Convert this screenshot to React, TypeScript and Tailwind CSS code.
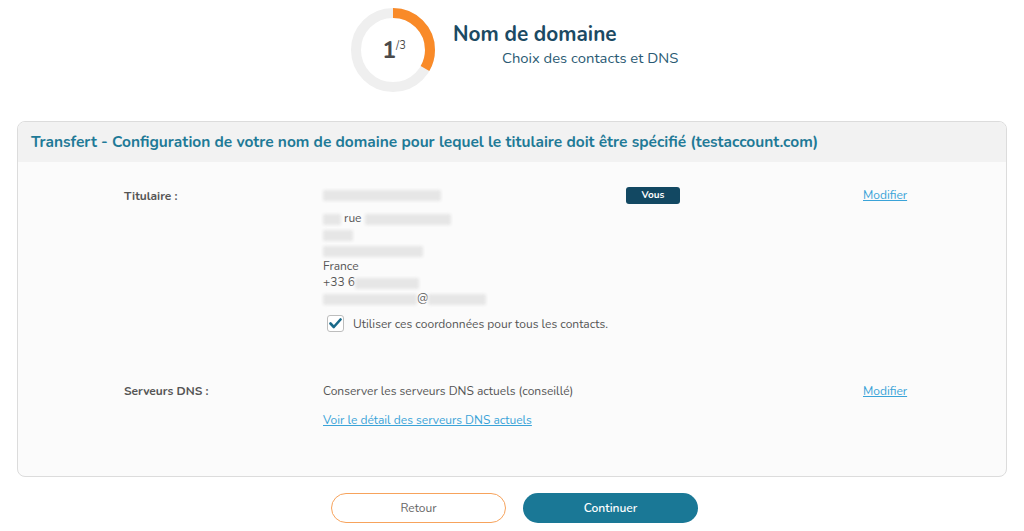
import React from "react";

const font = { fontFamily: "Nunito, Lato, 'Noto Sans', sans-serif" };

function Blur({ w, className = "" }: { w: number; className?: string }) {
	return (
		<span
			className={`inline-block h-[11px] rounded-[2px] bg-[#e6e6e6] blur-[1.5px] align-middle ${className}`}
			style={{ width: w }}
		/>
	);
}

function StepRing() {
	const r = 37;
	const c = 2 * Math.PI * r;
	return (
		<div className="relative h-[84px] w-[84px]">
			<svg width="84" height="84" viewBox="0 0 84 84">
				<circle cx="42" cy="42" r={r} fill="none" stroke="#efefef" strokeWidth="10" />
				<circle
					cx="42"
					cy="42"
					r={r}
					fill="none"
					stroke="#f98a28"
					strokeWidth="10"
					strokeDasharray={`${c / 3} ${c}`}
					transform="rotate(-90 42 42)"
				/>
			</svg>
			<div className="absolute inset-0 flex items-center justify-center pl-[2px]">
				<span className="text-[23px] font-bold leading-none text-[#4a4a4a]">1</span>
				<span className="-mt-[8px] text-[11px] text-[#4a4a4a]">/3</span>
			</div>
		</div>
	);
}

export default function App() {
	return (
		<div className="min-h-[531px] w-full bg-white text-[12px] text-[#555]" style={font}>
			<div className="flex pl-[351px] pt-[8px]">
				<div className="flex items-start gap-[18px]">
					<StepRing />
					<div className="pt-[13px]">
						<div className="text-[20.8px] font-bold leading-[26px] text-[#1b4a63]">Nom de domaine</div>
						<div className="pl-[49px] pt-[1px] text-[14.8px] leading-[20px] text-[#2a5a73]">
							Choix des contacts et DNS
						</div>
					</div>
				</div>
			</div>

			<div className="mx-[17px] mt-[29px] overflow-hidden rounded-[8px] border border-[#dcdcdc] bg-[#fbfbfb]">
				<div className="flex h-[40px] items-center bg-[#f2f2f2] px-[13px] text-[15.5px] font-bold text-[#1f7a97]">
					Transfert - Configuration de votre nom de domaine pour lequel le titulaire doit être spécifié (testaccount.com)
				</div>

				<div className="pb-[48px] pl-[106px] pt-[24px]">
					<div className="grid grid-cols-[199px_303px_237px_1fr] leading-[16px]">
						<div className="pt-[2px] font-bold">Titulaire :</div>
						<div>
							<div className="h-[16px]">
								<Blur w={118} />
							</div>
							<div className="mt-[8px] flex flex-col">
								<span>
									<Blur w={18} /> rue <Blur w={86} />
								</span>
								<span className="h-[16px]">
									<Blur w={30} />
								</span>
								<span className="h-[16px]">
									<Blur w={100} />
								</span>
								<span>France</span>
								<span>
									+33 6<Blur w={64} />
								</span>
								<span>
									<Blur w={94} />@<Blur w={58} />
								</span>
							</div>
							<label className="mt-[9px] flex items-center gap-[9px] pl-[4px]">
								<span className="flex h-[17px] w-[17px] items-center justify-center rounded-[3px] border border-[#bdbdbd] bg-white">
									<svg width="13" height="11" viewBox="0 0 13 11">
										<path d="M1.5 5.5 L4.8 9 L11.5 1.5" fill="none" stroke="#1a6a8a" strokeWidth="2.6" strokeLinecap="round" strokeLinejoin="round" />
									</svg>
								</span>
								<span>Utiliser ces coordonnées pour tous les contacts.</span>
							</label>
						</div>
						<div>
							<span className="inline-flex h-[17px] w-[54px] items-center justify-center rounded-[3px] bg-[#124862] text-[10px] font-bold text-white">
								Vous
							</span>
						</div>
						<div className="pt-[1px]">
							<a className="cursor-pointer text-[#3aa3d8] underline">Modifier</a>
						</div>
					</div>

					<div className="mt-[51px] grid grid-cols-[199px_303px_237px_1fr] leading-[16px]">
						<div className="font-bold">Serveurs DNS :</div>
						<div>
							<div>Conserver les serveurs DNS actuels (conseillé)</div>
							<a className="mt-[13px] block cursor-pointer whitespace-nowrap text-[#3aa3d8] underline">
								Voir le détail des serveurs DNS actuels
							</a>
						</div>
						<div />
						<div>
							<a className="cursor-pointer text-[#3aa3d8] underline">Modifier</a>
						</div>
					</div>
				</div>
			</div>

			<div className="mt-[16px] flex justify-center gap-[17px] pl-[5px]">
				<button className="h-[30px] w-[175px] rounded-full border border-[#f7a35c] bg-white text-[12px] text-[#666]">
					Retour
				</button>
				<button className="h-[30px] w-[175px] rounded-full bg-[#1a7896] text-[12px] font-semibold text-white">
					Continuer
				</button>
			</div>
		</div>
	);
}
